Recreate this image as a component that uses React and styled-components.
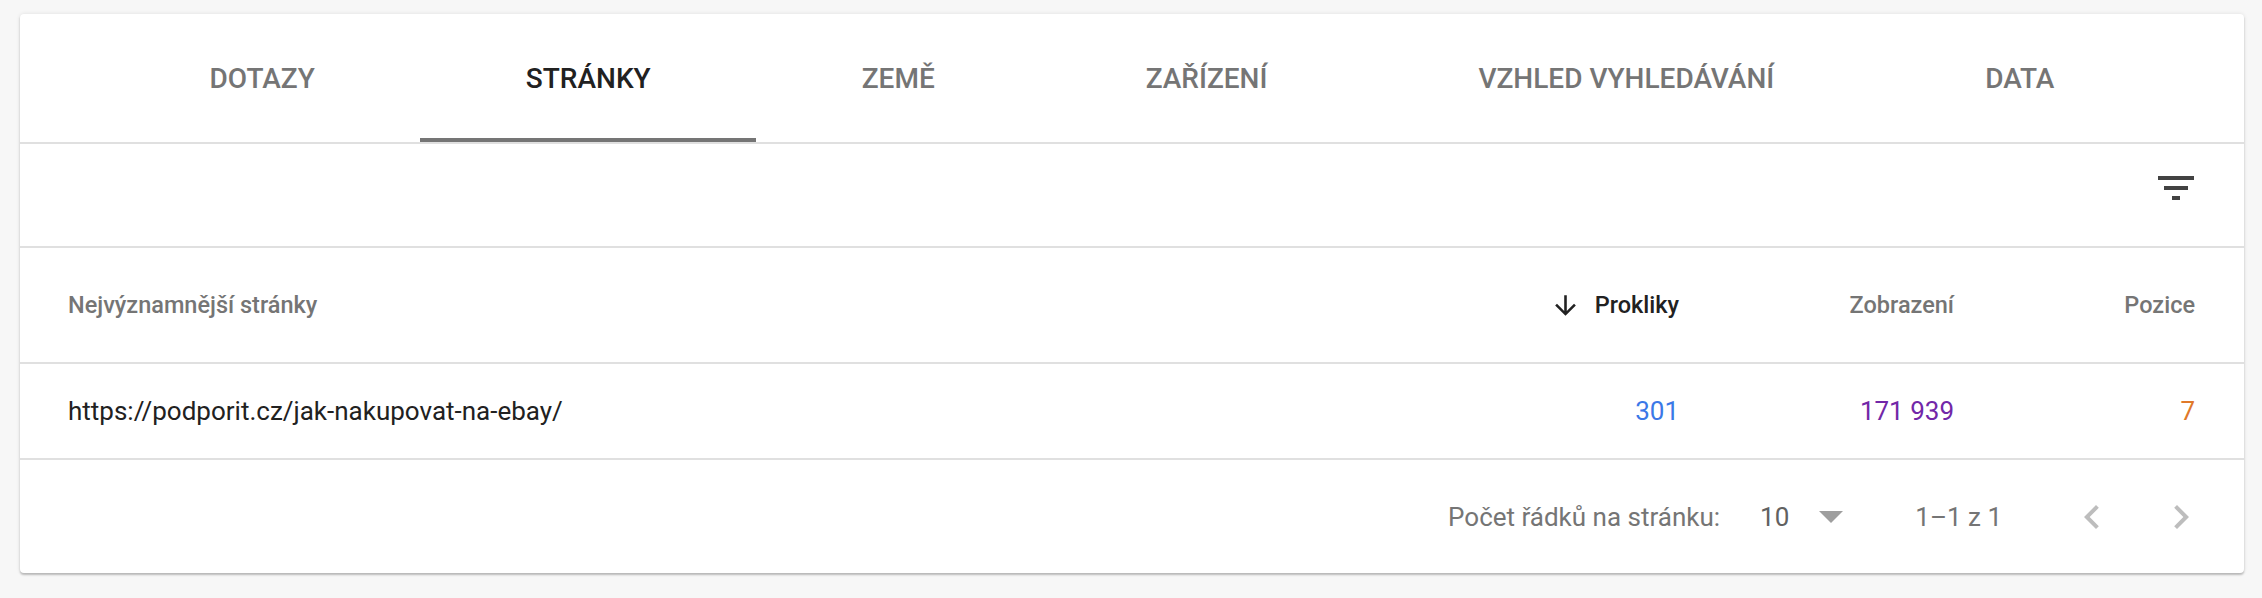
import React, { useState } from 'react'
import styled, { createGlobalStyle } from 'styled-components'

const GlobalStyle = createGlobalStyle`
  * { box-sizing: border-box; }
  body {
    margin: 0;
    padding: 14px 18px 25px 20px;
    background: #f7f7f7;
    font-family: Roboto, "Liberation Sans", Arial, sans-serif;
  }
`

const Card = styled.div`
  background: #fff;
  border-radius: 4px;
  box-shadow: 0 2px 2px rgba(0, 0, 0, 0.22), 0 0 4px rgba(0, 0, 0, 0.1);
  overflow: hidden;
`

const TabBar = styled.div`
  display: flex;
  justify-content: center;
  height: 130px;
  border-bottom: 2px solid #e0e0e0;
`

const Tab = styled.div`
  display: flex;
  align-items: center;
  padding: 4px 105.5px 0;
  border-bottom: 4px solid ${({ $active }) => ($active ? '#757575' : 'transparent')};
  font-size: 28px;
  font-weight: 500;
  text-transform: uppercase;
  white-space: nowrap;
  color: ${({ $active }) => ($active ? '#212121' : '#757575')};
  cursor: pointer;
`

const Toolbar = styled.div`
  display: flex;
  justify-content: flex-end;
  align-items: flex-start;
  height: 104px;
  padding: 20px 44px 0 0;
  border-bottom: 2px solid #e0e0e0;
`

const IconButton = styled.div`
  display: flex;
  align-items: center;
  justify-content: center;
  width: 48px;
  height: 48px;
  margin-left: ${({ $ml }) => $ml || 0}px;
  color: ${({ $color }) => $color || '#424242'};
`

const Row = styled.div`
  display: grid;
  grid-template-columns: 1fr 240px 275px 241px;
  align-items: center;
  height: ${({ $h }) => $h}px;
  padding: 0 49px 0 48px;
  border-bottom: 2px solid #e0e0e0;
`

const HeadCell = styled.div`
  display: flex;
  align-items: center;
  justify-content: ${({ $right }) => ($right ? 'flex-end' : 'flex-start')};
  gap: 14px;
  font-size: 23.5px;
  font-weight: 500;
  color: ${({ $sorted }) => ($sorted ? '#212121' : '#757575')};
  white-space: nowrap;
`

const Cell = styled.div`
  text-align: ${({ $right }) => ($right ? 'right' : 'left')};
  font-size: 26px;
  color: ${({ $color }) => $color || '#212121'};
  white-space: nowrap;
`

const Footer = styled.div`
  display: flex;
  justify-content: flex-end;
  align-items: center;
  height: 113px;
  padding-right: 39px;
  font-size: 26px;
  color: #757575;
`

const RowsValue = styled.span`
  margin-left: 40px;
  color: #616161;
`

const Caret = styled.svg`
  margin-left: 30px;
`

const Range = styled.span`
  margin-left: 72px;
`

const FilterIcon = () => (
  <svg width="48" height="48" viewBox="0 0 24 24" fill="currentColor">
    <path d="M10 18h4v-2h-4v2zM3 6v2h18V6H3zm3 7h12v-2H6v2z" />
  </svg>
)

const ArrowDown = () => (
  <svg width="31" height="31" viewBox="0 0 24 24" fill="#212121">
    <path d="M20 12l-1.41-1.41L13 16.17V4h-2v12.17l-5.58-5.59L4 12l8 8 8-8z" />
  </svg>
)

const ChevronLeft = () => (
  <svg width="48" height="48" viewBox="0 0 24 24" fill="currentColor">
    <path d="M15.41 7.41L14 6l-6 6 6 6 1.41-1.41L10.83 12z" />
  </svg>
)

const ChevronRight = () => (
  <svg width="48" height="48" viewBox="0 0 24 24" fill="currentColor">
    <path d="M10 6L8.59 7.41 13.17 12l-4.58 4.59L10 18l6-6z" />
  </svg>
)

const tabs = ['Dotazy', 'Stránky', 'Země', 'Zařízení', 'Vzhled vyhledávání', 'Data']

const App = () => {
  const [active, setActive] = useState(1)

  return (
    <>
      <GlobalStyle />
      <Card>
        <TabBar>
          {tabs.map((t, i) => (
            <Tab key={t} $active={i === active} onClick={() => setActive(i)}>
              {t}
            </Tab>
          ))}
        </TabBar>

        <Toolbar>
          <IconButton>
            <FilterIcon />
          </IconButton>
        </Toolbar>

        <Row $h={116}>
          <HeadCell>Nejvýznamnější stránky</HeadCell>
          <HeadCell $right $sorted>
            <ArrowDown />
            Prokliky
          </HeadCell>
          <HeadCell $right>Zobrazení</HeadCell>
          <HeadCell $right>Pozice</HeadCell>
        </Row>

        <Row $h={96}>
          <Cell>https://podporit.cz/jak-nakupovat-na-ebay/</Cell>
          <Cell $right $color="#3b78e7">301</Cell>
          <Cell $right $color="#7227a8">171 939</Cell>
          <Cell $right $color="#e0792a">7</Cell>
        </Row>

        <Footer>
          <span>Počet řádků na stránku:</span>
          <RowsValue>10</RowsValue>
          <Caret width="24" height="12" viewBox="0 0 24 12">
            <polygon points="0,0 24,0 12,12" fill="#9e9e9e" />
          </Caret>
          <Range>1–1 z 1</Range>
          <IconButton $ml={66} $color="#bdbdbd">
            <ChevronLeft />
          </IconButton>
          <IconButton $ml={41} $color="#bdbdbd">
            <ChevronRight />
          </IconButton>
        </Footer>
      </Card>
    </>
  )
}

export default App
